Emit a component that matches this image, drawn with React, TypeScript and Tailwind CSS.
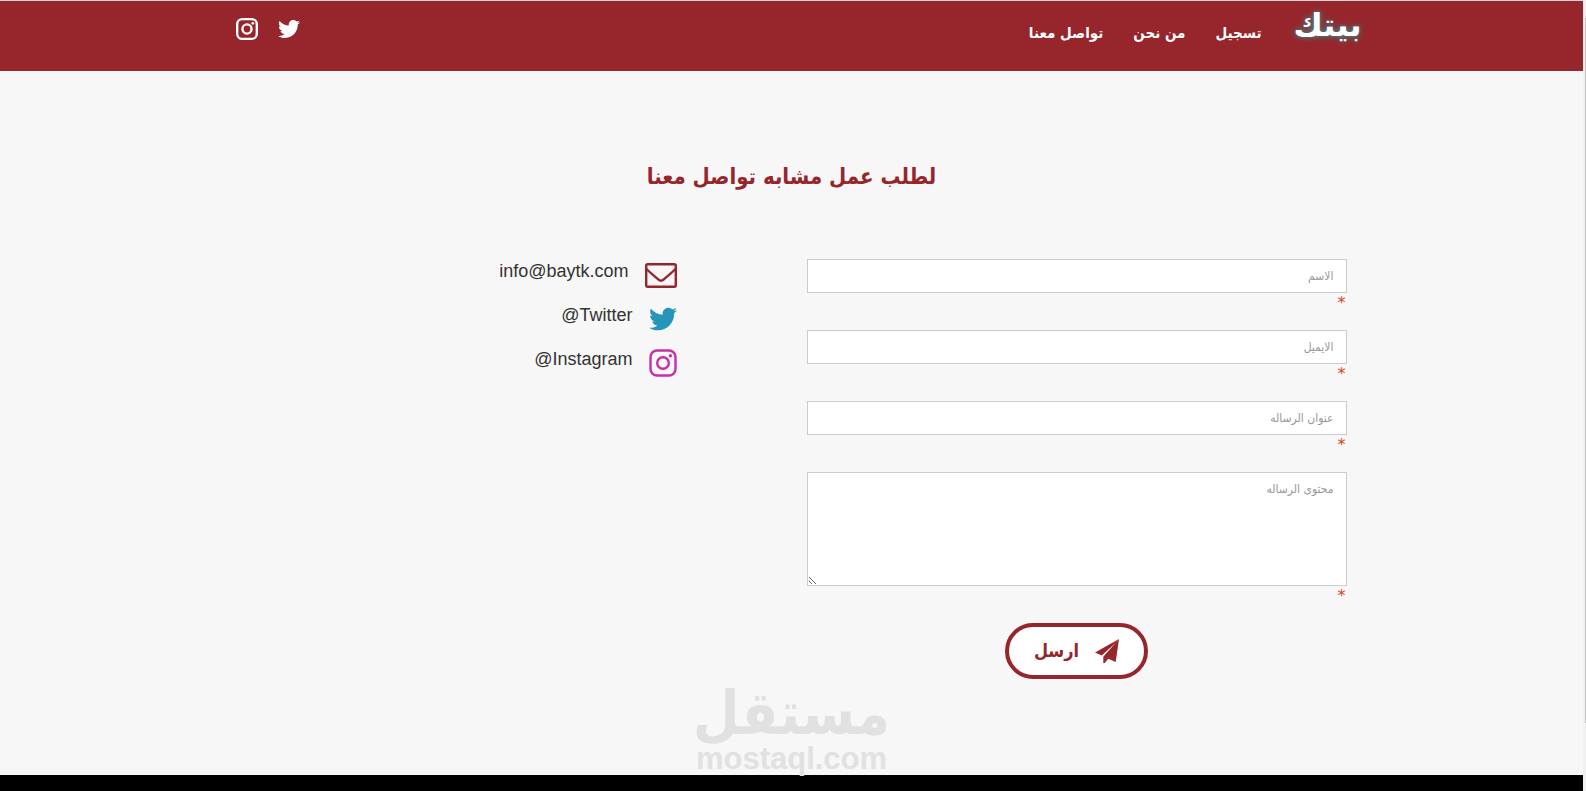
import type { ReactNode } from "react";
import { FaTwitter } from "react-icons/fa";

const NAV_LINKS = [
  { label: "تسجيل", href: "#register" },
  { label: "من نحن", href: "#about" },
  { label: "تواصل معنا", href: "#contact" },
];

const FIELDS = [
  { id: "name", type: "text", label: "الاسم" },
  { id: "email", type: "email", label: "الايميل" },
  { id: "subject", type: "text", label: "عنوان الرساله" },
];

function InstagramIcon({
  className,
  strokeWidth = 2.4,
}: {
  className?: string;
  strokeWidth?: number;
}) {
  return (
    <svg
      viewBox="0 0 28 28"
      fill="none"
      stroke="currentColor"
      strokeWidth={strokeWidth}
      className={className}
      aria-hidden="true"
    >
      <rect x="1.5" y="1.5" width="25" height="25" rx="6.5" />
      <circle cx="14" cy="14" r="5.8" />
      <circle cx="21.4" cy="6.8" r="1.7" fill="currentColor" stroke="none" />
    </svg>
  );
}

function EnvelopeIcon({ className }: { className?: string }) {
  return (
    <svg
      viewBox="0 0 32 25"
      fill="none"
      stroke="currentColor"
      strokeWidth="2.4"
      strokeLinejoin="round"
      className={className}
      aria-hidden="true"
    >
      <rect x="1.2" y="1.2" width="29.6" height="22.6" rx="1.5" />
      <path d="M1 5.500C5 9.700 9.500 13 13.200 16.400c1.800 1.700 3.800 1.700 5.600 0C22.500 13 27 9.700 31 5.500" />
    </svg>
  );
}

function SendIcon({ className }: { className?: string }) {
  return (
    <svg viewBox="0 0 24 24" fill="currentColor" className={className} aria-hidden="true">
      <path d="M24 0 0 13.600l6.700 3L20.500 4z" />
      <path d="M24 0 8.300 17.800V24h1.400l3.500-4.300L20.700 23z" />
    </svg>
  );
}

function Required() {
  return (
    <span
      className="block h-5 pr-px font-['DejaVu_Sans',sans-serif] text-base leading-5 text-[#d9441e]"
      aria-hidden="true"
    >
      *
    </span>
  );
}

function ContactRow({
  icon,
  text,
  href,
}: {
  icon: ReactNode;
  text: string;
  href: string;
}) {
  return (
    <li className="flex h-11 items-start gap-4">
      <span className="flex h-8 items-center">{icon}</span>
      <a href={href} dir="ltr" className="text-lg leading-6 text-[#333333]">
        {text}
      </a>
    </li>
  );
}

function Header() {
  return (
    <header className="border-t border-[#d5d5d5] bg-[#96262b] text-white">
      <div className="mx-auto flex h-[70px] w-full max-w-[1170px] items-start justify-between px-[15px]">
        <div className="flex items-start gap-8">
          <a
            href="#home"
            className="font-['DejaVu_Sans',sans-serif] text-[32px] leading-[48px] font-bold [text-shadow:0_0_6px_#3d8f96,0_0_3px_#3d6f76]"
          >
            بيتك
          </a>
          <nav className="flex gap-[30px] pt-5 font-['DejaVu_Sans_Condensed','DejaVu_Sans',sans-serif] text-[15px] leading-6 font-bold">
            {NAV_LINKS.map((link) => (
              <a key={link.href} href={link.href}>
                {link.label}
              </a>
            ))}
          </nav>
        </div>
        <div className="flex items-center gap-5 pt-[17px] pl-3.5">
          <a href="#twitter" aria-label="Twitter">
            <FaTwitter className="size-[22px]" />
          </a>
          <a href="#instagram" aria-label="Instagram">
            <InstagramIcon strokeWidth={3} className="size-[22px]" />
          </a>
        </div>
      </div>
    </header>
  );
}

function ContactForm() {
  return (
    <form className="px-[15px]" onSubmit={(e) => e.preventDefault()}>
      {FIELDS.map((field) => (
        <div key={field.id} className="mb-[17px]">
          <input
            id={field.id}
            type={field.type}
            dir="rtl"
            aria-label={field.label}
            placeholder={field.label}
            className="block h-[34px] w-full border border-[#cccccc] bg-white px-3 font-['DejaVu_Sans_Condensed','DejaVu_Sans',sans-serif] text-xs leading-5 placeholder:text-[#999999]"
          />
          <Required />
        </div>
      ))}
      <div className="mb-[17px]">
        <textarea
          id="message"
          aria-label="محتوى الرساله"
          placeholder="محتوى الرساله"
          className="block h-[114px] w-full resize border border-[#cccccc] bg-white px-3 py-1.5 font-['DejaVu_Sans_Condensed','DejaVu_Sans',sans-serif] text-xs leading-5 placeholder:text-[#999999]"
        />
        <Required />
      </div>
      <button
        type="submit"
        className="mx-auto flex h-14 w-[143px] items-center justify-center gap-4 rounded-full border-4 border-[#96262b] bg-white font-['DejaVu_Sans_Condensed','DejaVu_Sans',sans-serif] text-lg font-bold text-[#96262b]"
      >
        <SendIcon className="size-6" />
        ارسل
      </button>
    </form>
  );
}

function Watermark() {
  return (
    <div
      dir="ltr"
      className="pointer-events-none absolute inset-x-0 bottom-0 flex flex-col items-center font-bold text-[#e1e1e1]"
    >
      <span className="font-['DejaVu_Sans_Condensed','DejaVu_Sans',sans-serif] text-[60px] leading-[60px]">
        مستقل
      </span>
      <span className="text-[31px] leading-8">mostaql.com</span>
    </div>
  );
}

export default function App() {
  return (
    <div
      dir="rtl"
      className="flex min-h-screen bg-[#f7f7f7] font-['Liberation_Sans','DejaVu_Sans',sans-serif]"
    >
      <div className="w-[3px] shrink-0 bg-[#f1f1f1] pt-[18px] pb-[68px]">
        <div className="h-full w-px bg-[#c1c1c1]" />
      </div>
      <div className="flex min-w-0 flex-1 flex-col">
        <Header />
        <main className="relative flex-1 pb-24">
          <div className="mx-auto w-full max-w-[1170px] px-[15px]">
            <h1 className="pt-[86px] text-center font-['DejaVu_Sans_Condensed','DejaVu_Sans',sans-serif] text-[22px] leading-10 font-bold text-[#96262b]">
              لطلب عمل مشابه تواصل معنا
            </h1>
            <div className="grid grid-cols-2 pt-[62px]">
              <ContactForm />
              <ul className="pr-[115px]">
                <ContactRow
                  icon={<EnvelopeIcon className="h-[25px] w-8 text-[#96262b]" />}
                  text="info@baytk.com"
                  href="mailto:info@baytk.com"
                />
                <ContactRow
                  icon={<FaTwitter className="size-7 text-[#2795ba]" />}
                  text="@Twitter"
                  href="#twitter"
                />
                <ContactRow
                  icon={<InstagramIcon className="size-7 text-[#c62fa5]" />}
                  text="@Instagram"
                  href="#instagram"
                />
              </ul>
            </div>
          </div>
          <Watermark />
        </main>
        <footer className="h-4 bg-black" />
      </div>
    </div>
  );
}
